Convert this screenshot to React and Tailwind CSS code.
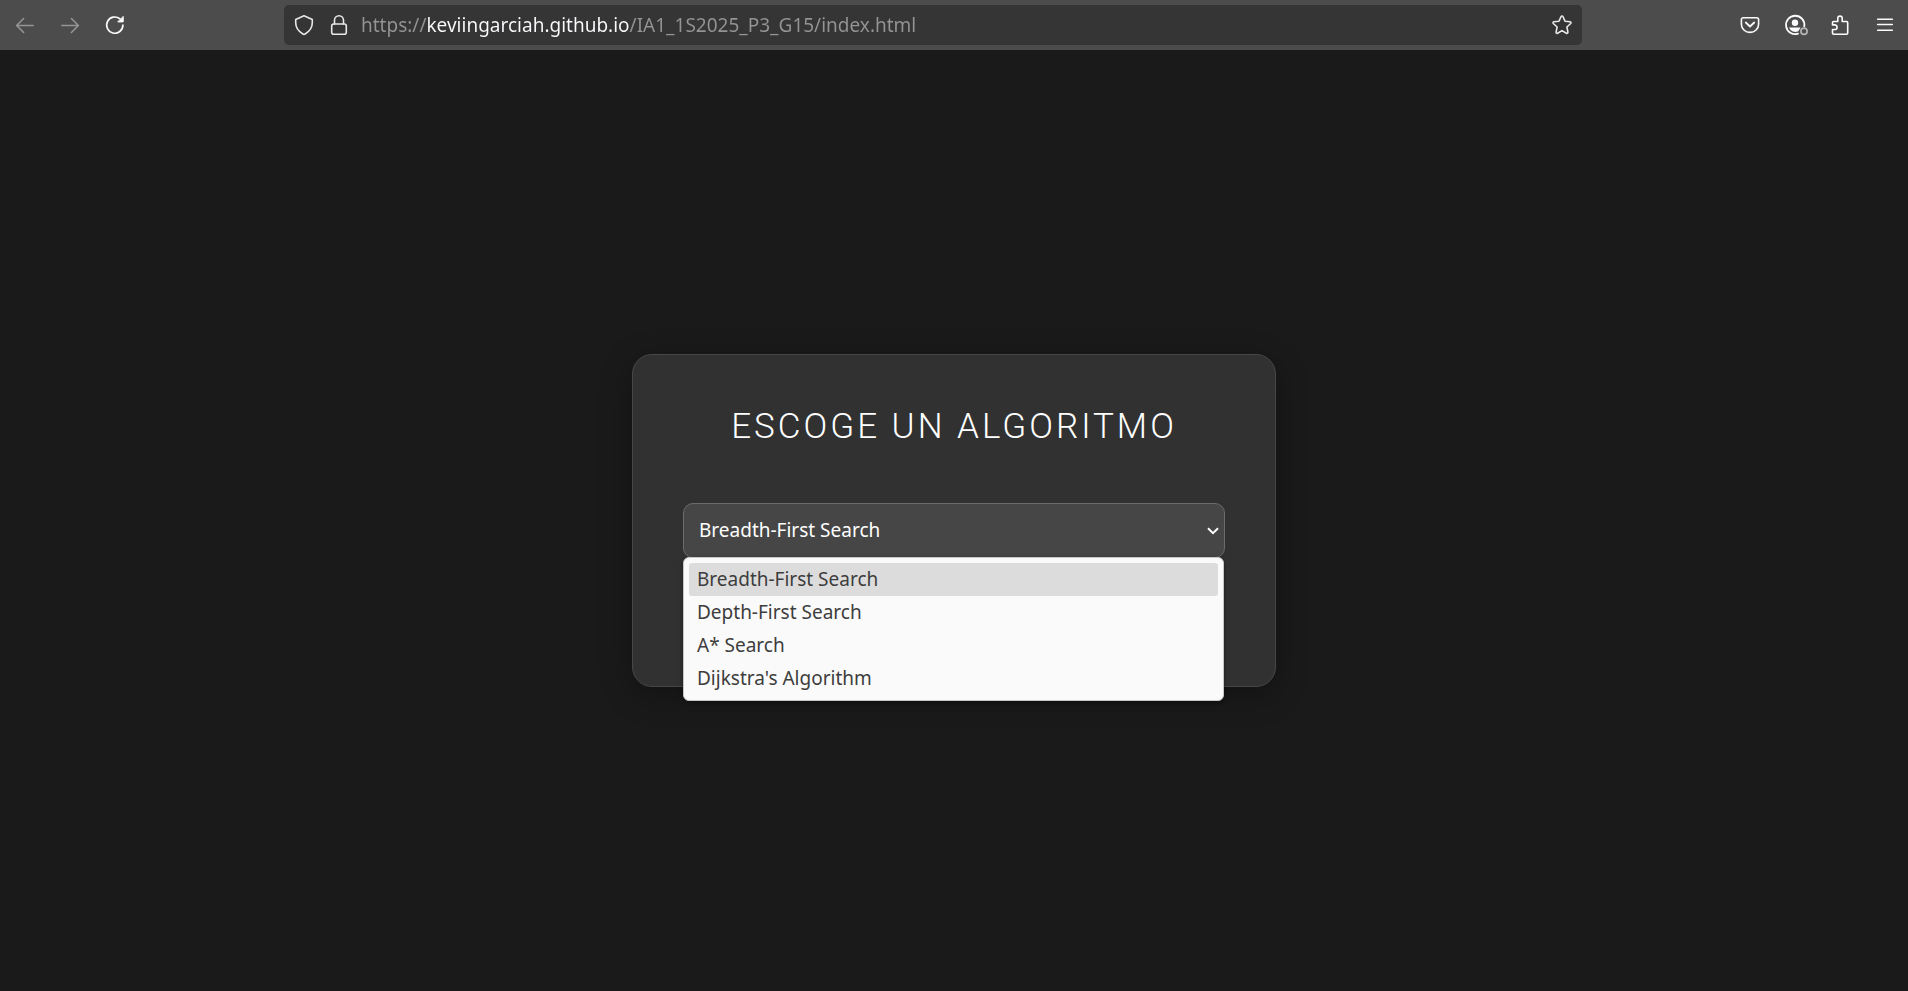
import { useState } from 'react';

const algorithms = [
  'Breadth-First Search',
  'Depth-First Search',
  'A* Search',
  "Dijkstra's Algorithm",
];

function Icon({ children }) {
  return (
    <svg
      viewBox="0 0 20 20"
      fill="none"
      stroke="currentColor"
      strokeWidth="1.6"
      strokeLinecap="round"
      strokeLinejoin="round"
      aria-hidden="true"
      className="size-5 shrink-0 overflow-visible"
    >
      {children}
    </svg>
  );
}

function ToolButton({ label, disabled, children }) {
  return (
    <button
      type="button"
      aria-label={label}
      disabled={disabled}
      className="flex h-10 w-[45px] items-center justify-center text-[#fbfbfe] disabled:text-[#949494]"
    >
      {children}
    </button>
  );
}

function Toolbar() {
  const [url, setUrl] = useState(
    'https://keviingarciah.github.io/IA1_1S2025_P3_G15/index.html'
  );
  return (
    <header className="flex h-[50px] shrink-0 items-center bg-[#4c4c4c] pr-px pl-0.5">
      <ToolButton label="Back" disabled>
        <Icon>
          <path d="M18.2 10.5H1.8M8.6 3.500 1.600 10.500l7 7" />
        </Icon>
      </ToolButton>
      <ToolButton label="Forward" disabled>
        <Icon>
          <path d="M1.800 10.500h16.400M11.400 3.500l7 7-7 7" />
        </Icon>
      </ToolButton>
      <ToolButton label="Reload">
        <Icon>
          <path d="M17.9 10.2A8.1 8.1 0 1 1 15 3.9" strokeWidth="1.7" />
          <path d="M18.2 1.8v5.1h-5.1z" fill="currentColor" strokeWidth="1" />
        </Icon>
      </ToolButton>

      <div className="mr-[145px] ml-[147px] flex h-10 min-w-0 flex-1 items-center rounded-[5px] bg-[#353535] text-[#e8e8e8]">
        <button type="button" aria-label="Tracking protection" className="ml-[10px]">
          <Icon>
            <path d="M10 .8 18.3 4.4v3.4c0 5-3.1 8.8-7.2 11.2a2.2 2.2 0 0 1-2.2 0C4.8 16.6 1.7 12.8 1.7 7.8V4.4z" />
          </Icon>
        </button>
        <button type="button" aria-label="Site information" className="ml-[15px]">
          <Icon>
            <rect x="2.7" y="9" width="14.6" height="10.3" rx="2" />
            <path d="M5.5 9V5.300a4.500 4.500 0 0 1 9 0V9" />
          </Icon>
        </button>
        <input
          type="text"
          aria-label="Address"
          value={url}
          onChange={(e) => setUrl(e.target.value)}
          className="ml-3 h-8 min-w-0 flex-1 bg-[linear-gradient(to_right,#949494_66px,#fbfbfe_66px,#fbfbfe_269px,#949494_269px)] bg-clip-text font-['Noto_Sans',sans-serif] text-[19px] text-transparent outline-none"
        />
        <button type="button" aria-label="Bookmark this page" className="mr-[10px]">
          <Icon>
            <path d="M9.1 1.5a1 1 0 0 1 1.8 0l2.1 4.7 5.1.6a1 1 0 0 1 .6 1.7l-3.8 3.500 1 5.100a1 1 0 0 1-1.500 1.100L10 15.600l-4.400 2.600a1 1 0 0 1-1.500-1.100l1-5.100-3.800-3.500a1 1 0 0 1 .6-1.700l5.100-.6z" />
          </Icon>
        </button>
      </div>

      <ToolButton label="Save to Pocket">
        <Icon>
          <path d="M3.3 2.7h13.400a1.900 1.900 0 0 1 1.900 1.900v4.600a8.600 8.200 0 0 1-17.200 0V4.600a1.900 1.900 0 0 1 1.900-1.900z" />
          <path d="m5.800 7.500 4.200 4 4.200-4" strokeWidth="1.8" />
        </Icon>
      </ToolButton>
      <ToolButton label="Account">
        <Icon>
          <path d="M19.300 11.300A9.200 9.200 0 1 0 13 18.700" strokeWidth="1.8" />
          <circle cx="10" cy="7.700" r="3.200" fill="currentColor" stroke="none" />
          <path d="M4 12.500h11.500l-2.200 3.800a7 7 0 0 1-7.500-1z" fill="currentColor" stroke="none" />
          <circle cx="19" cy="16.300" r="3.100" stroke="#b4b4b4" strokeWidth="1.7" />
        </Icon>
      </ToolButton>
      <ToolButton label="Extensions">
        <Icon>
          <path d="M3.700 19.200h12.800a1.200 1.200 0 0 0 1.200-1.200V7.700a1.200 1.200 0 0 0-1.200-1.200h-4.300V3.300a2.200 2.200 0 0 0-4.400 0v3.200H3.700a1.200 1.200 0 0 0-1.200 1.200v2.200h2.300a2.300 2.300 0 0 1 0 4.600H2.500V18a1.200 1.200 0 0 0 1.200 1.200z" />
        </Icon>
      </ToolButton>
      <ToolButton label="Menu">
        <Icon>
          <path d="M2.700 4.200h14.600M2.700 9.500h14.600M2.700 15.200h14.600" />
        </Icon>
      </ToolButton>
    </header>
  );
}

function AlgorithmPicker() {
  const [selected, setSelected] = useState(algorithms[0]);
  return (
    <div className="relative">
      <select
        aria-label="Algoritmo"
        value={selected}
        onChange={(e) => setSelected(e.target.value)}
        className="block h-[55px] w-full appearance-none rounded-[10px] border border-[#6b6b6b] bg-[#464646] px-[15px] font-['Noto_Sans',sans-serif] text-[19px] text-white outline-none"
      >
        {algorithms.map((name) => (
          <option key={name}>{name}</option>
        ))}
      </select>
      <svg
        viewBox="0 0 12 8"
        fill="none"
        stroke="white"
        strokeWidth="2"
        aria-hidden="true"
        className="pointer-events-none absolute top-6 right-[6px] h-2 w-3"
      >
        <path d="M1 1.2 6 6.2l5-5" />
      </svg>
      <ul
        role="listbox"
        aria-label="Algoritmos"
        className="absolute top-[54px] right-px left-0 rounded-[6px] border border-[#c4c8c8] bg-[#fafafa] p-[5px] font-['Noto_Sans',sans-serif] text-[19px] text-[#3d3d3d] shadow-[0_1px_4px_rgba(0,0,0,0.4)]"
      >
        {algorithms.map((name) => (
          <li
            key={name}
            role="option"
            aria-selected={name === selected}
            onClick={() => setSelected(name)}
            className="h-[33px] rounded-[3px] px-2 leading-[33px] aria-selected:bg-[#dcdcdc]"
          >
            {name}
          </li>
        ))}
      </ul>
    </div>
  );
}

export default function App() {
  return (
    <div className="flex min-h-screen flex-col bg-[#1a1a1a]">
      <Toolbar />
      <main className="flex flex-1 items-center justify-center">
        <section className="w-full max-w-[644px] rounded-[20px] border border-[#474747] bg-[#313131] px-[50px] pt-[50px] pb-32 shadow-[0_8px_32px_rgba(0,0,0,0.3)]">
          <h1 className="mb-[54px] text-center font-[Roboto,sans-serif] text-[35px] leading-[44px] font-light tracking-[3px] text-white uppercase">
            Escoge un algoritmo
          </h1>
          <AlgorithmPicker />
        </section>
      </main>
    </div>
  );
}
